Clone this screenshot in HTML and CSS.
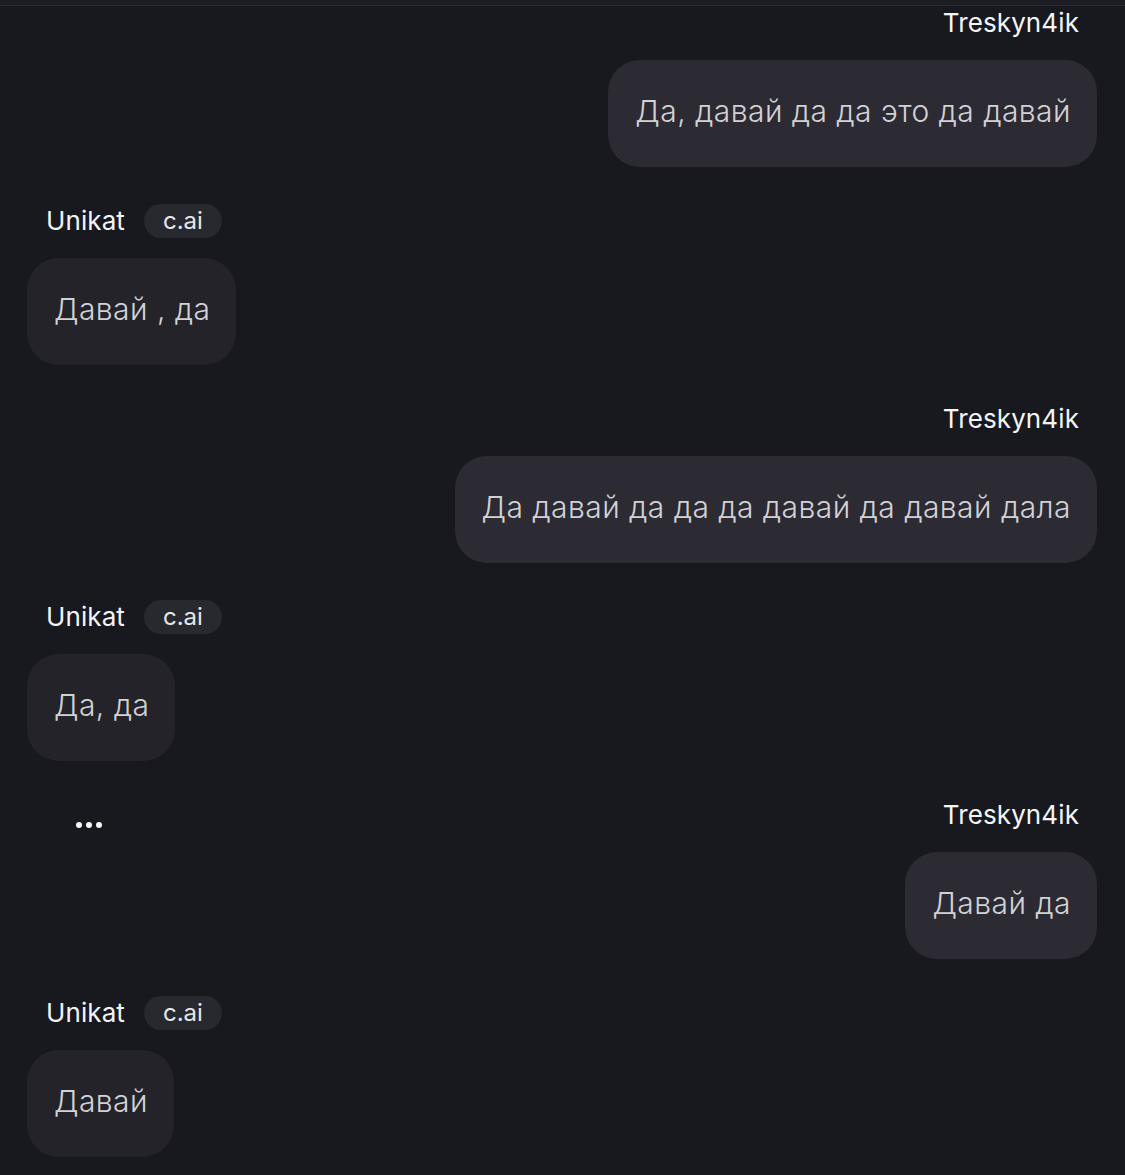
FILE: index.html
```html
<!DOCTYPE html>
<html lang="en">
<head>
    <meta charset="UTF-8">
    <meta name="viewport" content="width=device-width, initial-scale=1.0">
    <title>Chat</title>
    <link rel="stylesheet" href="styles.css">
</head>
<body>
    <div class="topbar"></div>

    <div class="chat">
        <!-- user -->
        <div class="msg user">
            <div class="name-row">
                <span class="name">Treskyn4ik</span>
            </div>
            <div class="bubble">Да, давай да да это да давай</div>
        </div>

        <!-- bot -->
        <div class="msg bot">
            <div class="name-row">
                <span class="name">Unikat</span>
                <span class="badge">c.ai</span>
            </div>
            <div class="bubble">Давай , да</div>
        </div>

        <div class="msg user">
            <div class="name-row">
                <span class="name">Treskyn4ik</span>
            </div>
            <div class="bubble">Да давай да да да давай да давай дала</div>
        </div>

        <div class="msg bot">
            <div class="name-row">
                <span class="name">Unikat</span>
                <span class="badge">c.ai</span>
            </div>
            <div class="bubble">Да, да</div>
        </div>

        <div class="msg user">
            <div class="name-row">
                <span class="more"><i></i><i></i><i></i></span>
                <span class="name">Treskyn4ik</span>
            </div>
            <div class="bubble">Давай да</div>
        </div>

        <div class="msg bot">
            <div class="name-row">
                <span class="name">Unikat</span>
                <span class="badge">c.ai</span>
            </div>
            <div class="bubble">Давай</div>
        </div>
    </div>
</body>
</html>
```

FILE: styles.css
```css
/* Reset */
body, div, span {
    margin: 0;
    padding: 0;
}

body {
    background: #18181f;
    color: #f2f2f4;
    font-family: 'Inter', 'Noto Sans', sans-serif;
    min-height: 100vh;
    overflow: hidden;
}

.topbar {
    height: 5px;
    background: #1c1c23;
    border-bottom: 1px solid #2b2b34;
}

.chat {
    display: flex;
    flex-direction: column;
    gap: 37px;
    padding: 0 28px 0 27px;
}

.msg {
    display: flex;
    flex-direction: column;
    gap: 20px;
}

.msg.user {
    align-items: flex-end;
}

.msg.bot {
    align-items: flex-start;
}

.name-row {
    height: 34px;
    display: flex;
    align-items: center;
    gap: 19px;
}

.msg.user .name-row {
    align-self: stretch;
    justify-content: flex-end;
    padding-right: 18px;
}

.msg.bot .name-row {
    padding-left: 19px;
}

.name {
    font-size: 26px;
    font-weight: 400;
    color: #f4f4f6;
    letter-spacing: 0.1px;
    margin-top: -2px;
}

.badge {
    height: 34px;
    line-height: 33px;
    padding: 0 19px;
    border-radius: 17px;
    background: #28282f;
    font-size: 24px;
    color: #e6e6ea;
}

.more {
    display: flex;
    gap: 4px;
    margin-right: auto;
    margin-left: 49px;
    margin-top: 20px;
}

.more i {
    width: 6px;
    height: 6px;
    border-radius: 50%;
    background: #f6f6f8;
}

.bubble {
    height: 107px;
    display: flex;
    align-items: center;
    padding: 0 26px 5px 27px;
    box-sizing: border-box;
    border-radius: 32px;
    font-size: 30px;
    font-weight: 300;
    letter-spacing: 0.45px;
    color: #d2d2d6;
    white-space: nowrap;
}

.msg.user .bubble {
    background: #2c2b33;
}

.msg.bot .bubble {
    background: #242329;
}
```
